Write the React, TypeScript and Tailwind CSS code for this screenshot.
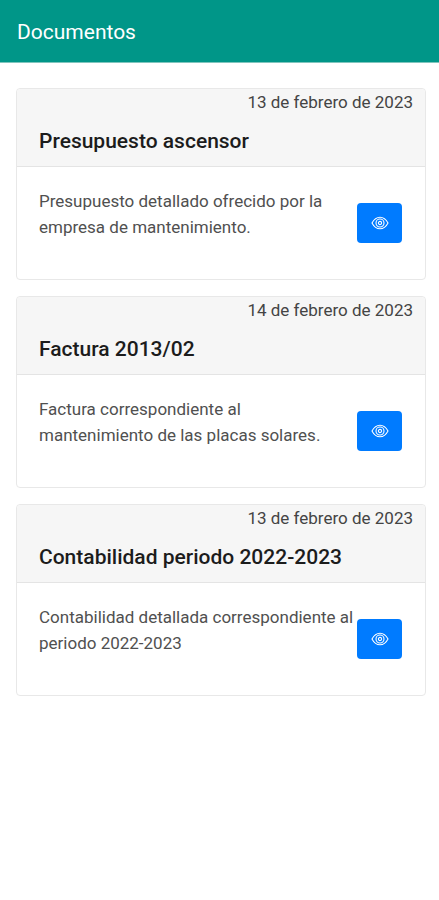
interface DocumentItem {
  id: number;
  date: string;
  title: string;
  description: string;
}

const documents: DocumentItem[] = [
  {
    id: 1,
    date: '13 de febrero de 2023',
    title: 'Presupuesto ascensor',
    description: 'Presupuesto detallado ofrecido por la empresa de mantenimiento.',
  },
  {
    id: 2,
    date: '14 de febrero de 2023',
    title: 'Factura 2013/02',
    description: 'Factura correspondiente al mantenimiento de las placas solares.',
  },
  {
    id: 3,
    date: '13 de febrero de 2023',
    title: 'Contabilidad periodo 2022-2023',
    description: 'Contabilidad detallada correspondiente al periodo 2022-2023',
  },
];

function EyeIcon() {
  return (
    <svg
      viewBox="0 0 18 14"
      className="h-[14px] w-[18px]"
      fill="none"
      stroke="currentColor"
      strokeWidth="1.1"
      aria-hidden="true"
    >
      <path d="M1 7C3 3.200 5.700 1.200 9 1.200S15 3.200 17 7c-2 3.800-4.700 5.800-8 5.800S3 10.800 1 7Z" />
      <circle cx="9" cy="7" r="4" />
      <circle cx="9" cy="7" r="1.6" />
    </svg>
  );
}

function DocumentCard({ item }: { item: DocumentItem }) {
  return (
    <article className="rounded border border-[#e8e8e8] bg-white">
      <div className="rounded-t border-b border-[#e4e4e4] bg-[#f6f6f6] pb-3">
        <p className="pr-3 text-right text-[17px] leading-[26px] text-[#444]">{item.date}</p>
        <h2 className="pt-[13px] pl-[22px] text-[21px] leading-[26px] font-medium text-[#1c1c1c]">
          {item.title}
        </h2>
      </div>
      <div className="flex min-h-[112px] items-start justify-between pt-[21px] pr-[23px] pl-[22px]">
        <p className="flex-1 text-[17px] leading-[26px] text-[#505050]">{item.description}</p>
        <button
          type="button"
          aria-label={`Ver ${item.title}`}
          className="mt-[15px] flex h-10 w-[45px] shrink-0 items-center justify-center rounded bg-[#007bff] text-white"
        >
          <EyeIcon />
        </button>
      </div>
    </article>
  );
}

export default function App() {
  return (
    <div className="min-h-screen bg-white font-['Roboto',sans-serif]">
      <header className="flex h-[63px] items-center border-b border-[#80c5bd] bg-[#009688] px-[17px]">
        <h1 className="pt-px text-[21px] leading-7 text-white">Documentos</h1>
      </header>
      <main className="flex flex-col gap-4 pt-[25px] pr-[13px] pl-4">
        {documents.map((item) => (
          <DocumentCard key={item.id} item={item} />
        ))}
      </main>
    </div>
  );
}
